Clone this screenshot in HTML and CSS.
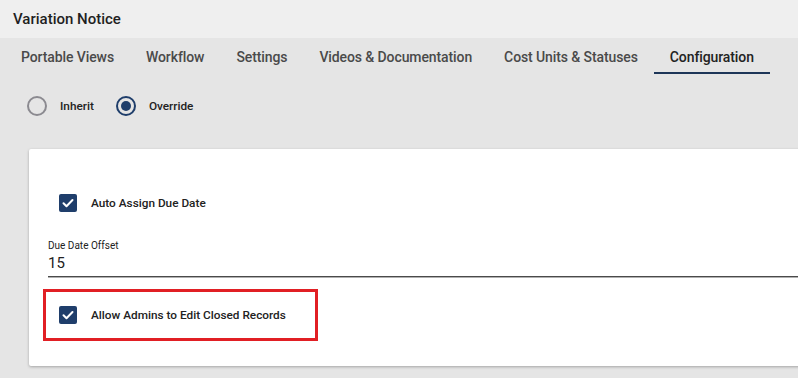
FILE: index.html
```html
<!DOCTYPE html>
<html>
<head>
<meta charset="utf-8">
<link rel="stylesheet" href="styles.css">
</head>
<body>
<div class="page">
  <div class="header">Variation Notice</div>
  <div class="tabs">
    <div class="tab">Portable Views</div>
    <div class="tab">Workflow</div>
    <div class="tab">Settings</div>
    <div class="tab">Videos &amp; Documentation</div>
    <div class="tab">Cost Units &amp; Statuses</div>
    <div class="tab active">Configuration</div>
  </div>
  <div class="radios">
    <div class="radio-item"><span class="radio"></span><span class="radio-label">Inherit</span></div>
    <div class="radio-item"><span class="radio checked"><span class="dot"></span></span><span class="radio-label">Override</span></div>
  </div>
  <div class="card">
    <div class="check-row first">
      <span class="checkbox"><svg width="18" height="18" viewBox="0 0 18 18"><path d="M4.5 9.2l3 3 6-6.2" fill="none" stroke="#fff" stroke-width="2" stroke-linecap="round" stroke-linejoin="round"/></svg></span>
      <span class="check-label">Auto Assign Due Date</span>
    </div>
    <div class="field">
      <div class="field-label">Due Date Offset</div>
      <div class="field-input">15</div>
    </div>
    <div class="highlight">
      <div class="check-row">
        <span class="checkbox"><svg width="18" height="18" viewBox="0 0 18 18"><path d="M4.5 9.2l3 3 6-6.2" fill="none" stroke="#fff" stroke-width="2" stroke-linecap="round" stroke-linejoin="round"/></svg></span>
        <span class="check-label">Allow Admins to Edit Closed Records</span>
      </div>
    </div>
  </div>
</div>
</body>
</html>
```

FILE: styles.css
```css
html, body {
  margin: 0;
  padding: 0;
}
body {
  background: #e5e5e5;
  font-family: Roboto, "Liberation Sans", sans-serif;
  color: #222;
  overflow: hidden;
  width: 798px;
  height: 378px;
}
.page {
  display: flex;
  flex-direction: column;
}
.header {
  height: 38px;
  background: #efefef;
  display: flex;
  align-items: center;
  padding-left: 13px;
  font-size: 15px;
  font-weight: 500;
  color: #1f1f1f;
}
.tabs {
  display: flex;
  padding-left: 5px;
}
.tab {
  box-sizing: border-box;
  height: 36px;
  padding: 4px 16px 0;
  border-bottom: 2px solid transparent;
  display: flex;
  align-items: center;
  font-size: 14px;
  letter-spacing: -0.1px;
  font-weight: 500;
  color: #4a4a4a;
}
.tab.active {
  color: #222;
  border-bottom-color: #1d3658;
}
.radios {
  display: flex;
  align-items: center;
  padding: 22px 0 0 27px;
  gap: 22px;
}
.radio-item {
  display: flex;
  align-items: center;
  gap: 13px;
}
.radio {
  box-sizing: border-box;
  width: 20px;
  height: 20px;
  border-radius: 50%;
  border: 2px solid #8b8a90;
  display: flex;
  align-items: center;
  justify-content: center;
}
.radio.checked {
  border-color: #1f3e6b;
}
.dot {
  width: 10px;
  height: 10px;
  border-radius: 50%;
  background: #1f3e6b;
}
.radio-label {
  font-size: 11.8px;
  font-weight: 500;
  color: #222;
}
.card {
  margin: 33px -20px 0 29px;
  background: #fff;
  border-radius: 2px;
  box-shadow: 0 1px 3px rgba(0, 0, 0, 0.28);
  padding: 45px 0 25px 0;
}
.check-row {
  display: flex;
  align-items: center;
  gap: 14px;
}
.check-row.first {
  padding-left: 30px;
}
.checkbox {
  width: 18px;
  height: 18px;
  border-radius: 2px;
  background: #1f3e6b;
  display: flex;
}
.check-label {
  font-size: 11.8px;
  font-weight: 500;
  color: #222;
}
.field {
  margin: 28px 0 0 19px;
  border-bottom: 1px solid #4a4a4a;
  box-shadow: 0 1px 0 #b0b0b0;
}
.field-label {
  font-size: 10px;
  line-height: 12px;
  color: #222;
}
.field-input {
  margin-top: 2px;
  font-size: 15px;
  line-height: 18px;
  padding-bottom: 4px;
  color: #222;
}
.highlight {
  box-sizing: border-box;
  margin: 12px 0 0 14px;
  width: 275px;
  height: 52px;
  border: 3px solid #e11f24;
  padding-left: 13px;
  display: flex;
  align-items: center;
}
```
